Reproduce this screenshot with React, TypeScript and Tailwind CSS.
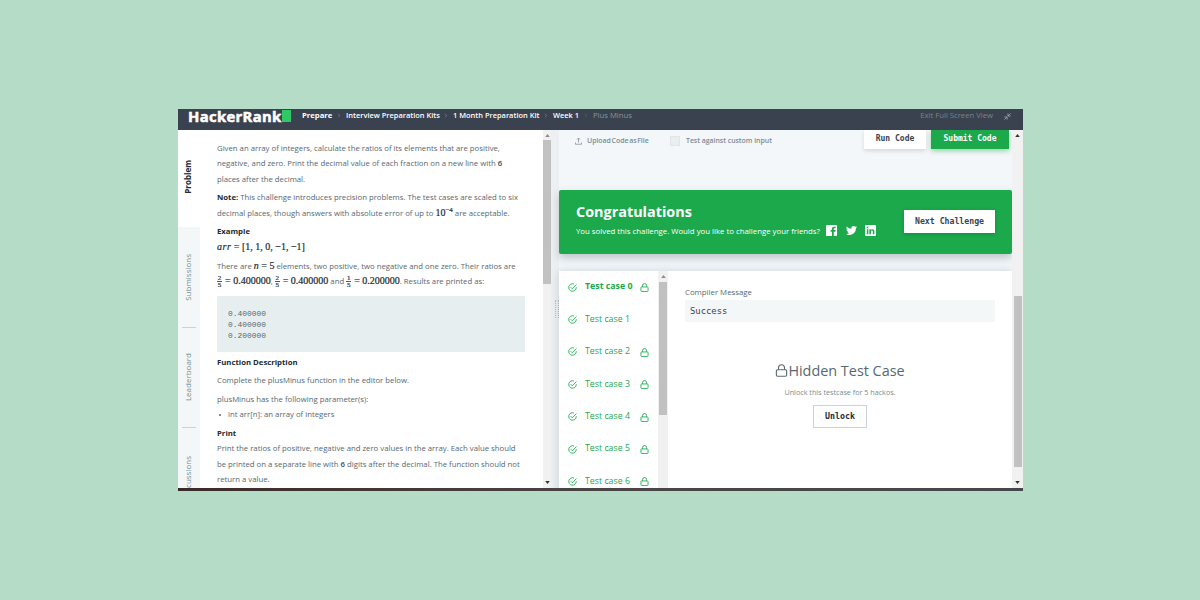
import type { ReactNode } from 'react';
import { ChevronRight } from 'lucide-react';

const crumbs = [
  { label: 'Interview Preparation Kits', cls: 'ml-[4px] w-[94px]' },
  { label: '1 Month Preparation Kit', cls: 'ml-[4px] w-[87px]' },
  { label: 'Week 1', cls: 'ml-[4px] w-[27px]' },
];

const testCases = [
  { id: 0, locked: true },
  { id: 1, locked: false },
  { id: 2, locked: true },
  { id: 3, locked: true },
  { id: 4, locked: true },
  { id: 5, locked: true },
  { id: 6, locked: true },
];

function LockIcon({ className }: { className: string }) {
  return (
    <svg viewBox="0 0 24 24" fill="none" stroke="currentColor" className={className}>
      <rect x="2.5" y="10.5" width="19" height="12" rx="2" />
      <path d="M6.500 10.500V7a5.500 5.500 0 0 1 11 0v3.500" />
    </svg>
  );
}

function CheckIcon() {
  return (
    <svg viewBox="0 0 24 24" fill="none" stroke="currentColor" strokeWidth="2.3" className="h-[9px] w-[9px] shrink-0">
      <path d="M22 11v1a10 10 0 1 1-6-9.2" />
      <path d="M7 11l4.5 4.5L22.5 4" />
    </svg>
  );
}

function Arrow({ up, dark }: { up?: boolean; dark?: boolean }) {
  return (
    <svg viewBox="0 0 6 4" className={`h-[3px] w-[5px] ${dark ? 'text-[#333]' : 'text-[#8b8b8b]'}`} fill="currentColor">
      <path d={up ? 'M0 4L3 0L6 4Z' : 'M0 0L3 4L6 0Z'} />
    </svg>
  );
}

function Frac({ n, d }: { n: string; d: string }) {
  return (
    <span className="mr-[3px] inline-flex h-[14px] w-[5px] flex-col items-center align-middle text-[7px] leading-[6.5px]">
      <span className="w-[5px] border-b border-[#555] text-center">{n}</span>
      <span>{d}</span>
    </span>
  );
}

function MathText({ children }: { children: ReactNode }) {
  return <span className="font-['Liberation_Serif',serif] text-[10px] leading-none text-[#222b33] [-webkit-text-stroke:0.2px]">{children}</span>;
}

function Line({ children, className = '' }: { children: ReactNode; className?: string }) {
  return <div className={`h-[15.5px] leading-[15.5px] whitespace-nowrap ${className}`}>{children}</div>;
}

function SideTab({ label, className }: { label: string; className: string }) {
  return (
    <div className={`flex shrink-0 justify-center ${className}`}>
      <span className="mr-[3px] rotate-180 whitespace-nowrap [writing-mode:vertical-rl]">{label}</span>
    </div>
  );
}

function Header() {
  return (
    <header className="flex h-[20.5px] shrink-0 items-start bg-[#39424e] text-[7.7px] leading-[13.5px] whitespace-nowrap text-white">
      <div className="ml-[10px] flex w-[105px] items-start">
        <span className="mt-[1px] w-[94px] text-[14.8px] font-bold tracking-[0.35px] [-webkit-text-stroke:0.55px]">HackerRank</span>
        <span className="mt-[1px] h-[12px] w-[9px] bg-[#2ec866]" />
      </div>
      <span className="ml-[9px] w-[31px] font-bold">Prepare</span>
      {crumbs.map((c) => (
        <div key={c.label} className="flex items-center text-[7.45px] font-semibold">
          <ChevronRight className="ml-[3px] h-[7px] w-[6px] shrink-0 text-[#9aa3ab]" />
          <span className={c.cls}>{c.label}</span>
        </div>
      ))}
      <div className="flex items-center">
        <ChevronRight className="ml-[3px] h-[7px] w-[6px] shrink-0 text-[#6b7682]" />
        <span className="ml-[4px] text-[#8b949d]">Plus Minus</span>
      </div>
      <span className="ml-auto text-[#79838d]">Exit Full Screen View</span>
      <svg viewBox="0 0 16 16" className="mt-[4px] mr-[12px] ml-[11px] h-[7px] w-[7px]" fill="none" stroke="#9aa3ab" strokeWidth="2">
        <path d="M9 1v6h6M9 7l6-6M7 15V9H1M7 9l-6 6" />
      </svg>
    </header>
  );
}

function Problem() {
  return (
    <section className="w-[343px] shrink-0 overflow-hidden pt-[11px] pl-[17px] text-[7.75px] text-[#576871]">
      <Line>Given an array of integers, calculate the ratios of its elements that are positive,</Line>
      <Line>negative, and zero. Print the decimal value of each fraction on a new line with <b className="font-semibold text-[#39424e]">6</b></Line>
      <Line>places after the decimal.</Line>
      <Line className="mt-[3.2px]"><b className="text-[#222b33]">Note:</b> This challenge introduces precision problems. The test cases are scaled to six</Line>
      <Line>
        decimal places, though answers with absolute error of up to <MathText>10<sup className="text-[7px] leading-none">−4</sup></MathText> are acceptable.
      </Line>
      <Line className="mt-[3.2px] font-bold text-[#222b33]">Example</Line>
      <Line><MathText><i className="tracking-[0.5px]">arr</i> = [1, 1, 0, −1, −1]</MathText></Line>
      <Line className="mt-[3.2px]">
        There are <MathText><i>n</i> = 5</MathText> elements, two positive, two negative and one zero. Their ratios are
      </Line>
      <Line>
        <MathText><Frac n="2" d="5" />= 0.400000</MathText>, <MathText><Frac n="2" d="5" />= 0.400000</MathText> and <MathText><Frac n="1" d="5" />= 0.200000</MathText>. Results are printed as:
      </Line>
      <pre className="mt-[6.5px] h-[55.5px] w-[308px] bg-[#e7eeef] pt-[12px] pl-[11px] font-['Liberation_Mono',monospace] text-[7.9px] leading-[11.2px] text-[#576871]">
        {'0.400000\n0.400000\n0.200000'}
      </pre>
      <Line className="mt-[3px] font-bold text-[#222b33]">Function Description</Line>
      <Line className="mt-[3px]">Complete the plusMinus function in the editor below.</Line>
      <Line className="mt-[3px]">plusMinus has the following parameter(s):</Line>
      <Line className="flex items-center">
        <span className="mr-[7.500px] ml-[1.500px] h-[2px] w-[2px] rounded-full bg-[#576871]" />
        int arr[n]: an array of integers
      </Line>
      <Line className="mt-[3px] font-bold text-[#222b33]">Print</Line>
      <Line>Print the ratios of positive, negative and zero values in the array. Each value should</Line>
      <Line>be printed on a separate line with <b className="font-semibold text-[#39424e]">6</b> digits after the decimal. The function should not</Line>
      <Line>return a value.</Line>
    </section>
  );
}

function Toolbar() {
  return (
    <div className="flex h-[53px] items-start pl-[16px] text-[7px] leading-[10px] whitespace-nowrap">
      <svg viewBox="0 0 14 16" className="mt-[7px] h-[8px] w-[7px]" fill="none" stroke="#7d8b94" strokeWidth="1.5">
        <path d="M7 11V2M4 5l3-3 3 3M1 11v3.5h12V11" />
      </svg>
      <span className="mt-[6.5px] ml-[5px] w-[83px] font-semibold tracking-[-0.05px] [word-spacing:-1.1px] text-[#7d8b94]">Upload Code as File</span>
      <span className="mt-[6.5px] h-[10px] w-[10px] border border-[#dfe5e8] bg-[#e9eef0]" />
      <span className="mt-[6.5px] ml-[6px] text-[6.9px] font-semibold text-[#7d8b94]">Test against custom input</span>
      <div className="mr-[3px] ml-auto flex gap-[5px] font-['DejaVu_Sans_Mono',monospace] text-[8px] font-bold">
        <div className="flex h-[19.5px] w-[62px] items-center justify-center bg-white pb-[1px] text-[#39424e] shadow-[0_2px_4px_rgba(0,0,0,0.12)]">Run Code</div>
        <div className="flex h-[19.5px] w-[78px] items-center justify-center bg-[#1ba94c] pb-[1px] text-white shadow-[0_2px_5px_rgba(27,169,76,0.45)]">Submit Code</div>
      </div>
    </div>
  );
}

function Banner() {
  return (
    <div className="mt-[7.5px] flex h-[64px] rounded-[2px] bg-[#1ba94c] pl-[17px] whitespace-nowrap text-white shadow-[0_4px_8px_rgba(60,80,90,0.3)]">
      <div>
        <h2 className="mt-[12px] text-[14.4px] leading-[20px] font-bold">Congratulations</h2>
        <div className="flex items-center text-[7.8px] leading-[14px]">
          <span className="mt-[1.500px] w-[250px]">You solved this challenge. Would you like to challenge your friends?</span>
          <svg viewBox="0 0 24 24" className="mt-[1px] h-[11px] w-[11px]">
            <rect x="0" y="0" width="24" height="24" rx="2" fill="white" />
            <path d="M13 24V14.500h-3V11h3V8.500C13 5.200 15 3.600 18 3.600h3V7.200h-2c-1.600 0-2 .7-2 1.900V11h4l-.5 3.500H17V24z" fill="#1ba94c" />
          </svg>
          <svg viewBox="0 0 24 24" className="mt-[1px] ml-[9px] h-[11px] w-[11px]" fill="white">
            <path d="M24 4.600a10 10 0 0 1-2.800.8 5 5 0 0 0 2.100-2.700 10 10 0 0 1-3.100 1.200 4.900 4.900 0 0 0-8.400 4.500A14 14 0 0 1 1.700 3.200a4.900 4.900 0 0 0 1.500 6.500 5 5 0 0 1-2.200-.6 4.900 4.900 0 0 0 3.900 4.900 5 5 0 0 1-2.200.1 4.900 4.900 0 0 0 4.600 3.400A10 10 0 0 1 0 19.500 14 14 0 0 0 21.500 7.100 10 10 0 0 0 24 4.600z" />
          </svg>
          <svg viewBox="0 0 24 24" className="mt-[1px] ml-[8px] h-[11px] w-[11px]">
            <rect x="0" y="0" width="24" height="24" rx="2" fill="white" />
            <path d="M4 9.500h3.300V20H4zM4 4h3.300v3.300H4zM9.500 9.500h3.200v1.600c.6-1.100 1.800-1.900 3.500-1.900 3.300 0 4.200 2.100 4.200 5V20h-3.300v-5.200c0-1.400-.3-2.700-1.900-2.700-1.700 0-2.300 1.200-2.300 2.700V20H9.500z" fill="#1ba94c" />
          </svg>
        </div>
      </div>
      <div className="mt-[20px] mr-[17px] ml-auto flex h-[23px] w-[91px] items-center justify-center bg-white font-['DejaVu_Sans_Mono',monospace] text-[8.2px] font-bold text-[#39424e] shadow-[0_1px_4px_rgba(0,0,0,0.2)]">
        Next Challenge
      </div>
    </div>
  );
}

function Results() {
  return (
    <div className="mt-[16.5px] flex h-[240px] bg-white shadow-[0_0_8px_rgba(60,80,90,0.22)]">
      <div className="w-[99px] shrink-0 pt-[0.4px] text-[#1ba94c]">
        {testCases.map((t) => (
          <div key={t.id} className="flex h-[32.4px] items-center pl-[9px]">
            <CheckIcon />
            <span className={`ml-[8px] w-[55px] text-[8.8px] whitespace-nowrap ${t.id === 0 ? 'font-bold' : ''}`}>Test case {t.id}</span>
            {t.locked && <LockIcon className="mt-[1px] h-[9px] w-[9px] stroke-[2.3]" />}
          </div>
        ))}
      </div>
      <div className="flex w-[10px] shrink-0 flex-col items-center bg-[#f1f1f1] pt-[4px]">
        <Arrow up />
        <div className="mt-[4px] h-[133px] w-[8px] bg-[#c1c1c1]" />
      </div>
      <div className="flex grow flex-col pt-[15.5px] pl-[17px]">
        <p className="text-[7.8px] leading-[12px] text-[#576871]">Compiler Message</p>
        <div className="mt-[2px] flex h-[21.5px] w-[310px] items-center bg-[#f3f7f7] pt-px pl-[5px] font-['DejaVu_Sans_Mono',monospace] text-[8.9px] text-[#39424e]">Success</div>
        <div className="flex w-[310px] flex-col items-center pt-[38px] text-[#576871]">
          <div className="flex items-center leading-[22px]">
            <LockIcon className="h-[13px] w-[13px] stroke-2" />
            <span className="text-[14.4px]">Hidden Test Case</span>
          </div>
          <p className="mt-[4px] text-[7.2px] leading-[12px] text-[#738f93]">Unlock this testcase for 5 hackos.</p>
          <div className="mt-[7px] flex h-[23px] w-[54px] items-center justify-center border border-[#c9d5dd] font-['DejaVu_Sans_Mono',monospace] text-[8.3px] font-bold text-[#222b33]">Unlock</div>
        </div>
      </div>
    </div>
  );
}

export default function App() {
  return (
    <div className="flex h-[600px] w-[1200px] items-start bg-[#b4dcc7] pt-[109px] pl-[178px] font-['Open_Sans','Noto_Sans',sans-serif]">
      <div className="flex h-[382px] w-[845px] flex-col overflow-hidden bg-white">
        <Header />
        <main className="flex h-[358.500px] shrink-0 overflow-hidden">
          <nav className="flex w-[22px] shrink-0 flex-col overflow-hidden text-[8px] leading-[12px] text-[#738f93]">
            <SideTab label="Problem" className="h-[97.5px] items-center pb-[2px] font-bold text-[#222b33]" />
            <div className="flex grow flex-col bg-[#f3f7f7] px-[4px]">
              <SideTab label="Submissions" className="h-[101px] items-center border-b border-[#c8d3d8]" />
              <SideTab label="Leaderboard" className="h-[100px] items-center border-b border-[#c8d3d8]" />
              <SideTab label="Discussions" className="h-[100px] items-center" />
            </div>
          </nav>
          <Problem />
          <div className="flex w-[8px] shrink-0 flex-col items-center bg-[#f1f1f1] pt-[4.5px] pb-[4px]">
            <Arrow up />
            <div className="mt-[3px] h-[144px] w-[8px] bg-[#c1c1c1]" />
            <div className="mt-auto flex"><Arrow dark /></div>
          </div>
          <div className="flex w-[8px] shrink-0 items-center justify-end bg-[#edf0f2]">
            <div className="h-[18px] w-[4px] border-x border-dotted border-[#b9c0c4]" />
          </div>
          <section className="w-[453px] shrink-0 bg-[#f3f7f9]">
            <Toolbar />
            <Banner />
            <Results />
          </section>
          <div className="flex w-[11px] shrink-0 flex-col items-center bg-[#f1f1f1] pt-[4.5px] pb-[4px]">
            <Arrow up dark />
            <div className="mt-[159px] h-[171px] w-[8px] bg-[#c1c1c1]" />
            <div className="mt-auto flex"><Arrow dark /></div>
          </div>
        </main>
        <div className="h-[3px] shrink-0 bg-linear-to-r from-[#3a2b28] via-[#4b4545] to-[#46474c]" />
      </div>
    </div>
  );
}
